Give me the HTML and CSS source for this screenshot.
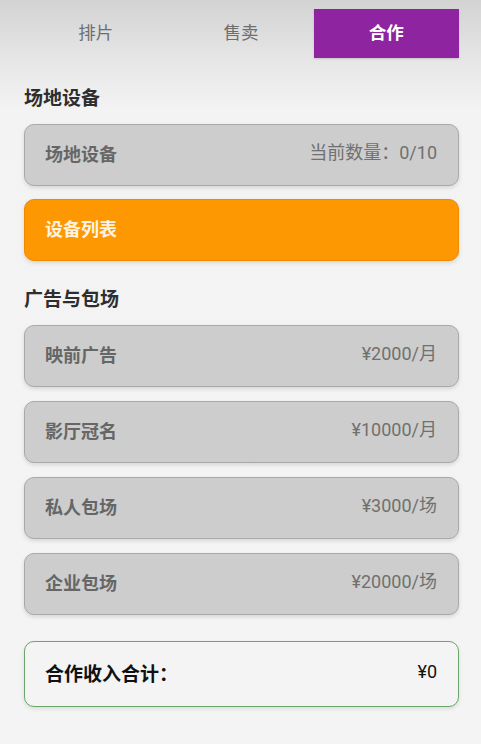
FILE: index.html
```html
<!DOCTYPE html>
<html lang="zh">
<head>
<meta charset="utf-8">
<link rel="stylesheet" href="styles.css">
</head>
<body>
<div class="page">
  <nav class="tabs">
    <div class="tab">排片</div>
    <div class="tab">售卖</div>
    <div class="tab active">合作</div>
  </nav>

  <section class="section first">
    <h2 class="title">场地设备</h2>
    <div class="list eq">
      <div class="card"><span class="name">场地设备</span><span class="value">当前数量：0/10</span></div>
      <div class="card orange"><span class="name">设备列表</span></div>
    </div>
  </section>

  <section class="section">
    <h2 class="title">广告与包场</h2>
    <div class="list">
      <div class="card"><span class="name">映前广告</span><span class="value">¥2000/月</span></div>
      <div class="card"><span class="name">影厅冠名</span><span class="value">¥10000/月</span></div>
      <div class="card"><span class="name">私人包场</span><span class="value">¥3000/场</span></div>
      <div class="card"><span class="name">企业包场</span><span class="value">¥20000/场</span></div>
    </div>
  </section>

  <div class="total"><span class="total-label">合作收入合计：</span><span class="total-value">¥0</span></div>
</div>
</body>
</html>
```

FILE: styles.css
```css
html, body {
  margin: 0;
  padding: 0;
}
body {
  width: 481px;
  height: 744px;
  overflow: hidden;
  font-family: "Roboto", "Noto Sans CJK SC", sans-serif;
  background: linear-gradient(to bottom, #d3d3d3 0px, #e9e9e9 70px, #f3f3f3 110px, #f4f4f4 100%);
}
.page {
  padding: 9px 22px 0 24px;
}
.tabs {
  display: grid;
  grid-template-columns: 1fr 1fr 1fr;
  height: 49px;
  margin-left: -1px;
}
.tab {
  display: flex;
  align-items: center;
  justify-content: center;
  padding-bottom: 3px;
  font-family: "Noto Sans CJK SC", sans-serif;
  font-size: 17.5px;
  line-height: 1;
  color: #6e6e6e;
}
.tab.active {
  background: #8e24a0;
  color: #ffffff;
  font-weight: 700;
  box-shadow: 0 1px 2px rgba(0,0,0,0.15);
}
.section {
  margin-top: 25px;
}
.section.first {
  margin-top: 27px;
}
.title {
  margin: 0 0 13px 0;
  font-family: "Noto Sans CJK SC", sans-serif;
  font-size: 19px;
  line-height: 24px;
  padding-bottom: 2px;
  font-weight: 700;
  color: #2e2e2e;
}
.list {
  display: flex;
  flex-direction: column;
  gap: 14px;
}
.list.eq {
  gap: 13px;
}
.card {
  height: 62px;
  box-sizing: border-box;
  display: flex;
  align-items: center;
  justify-content: space-between;
  padding: 0 21px 4px 20px;
  background: #cdcdcd;
  border: 1px solid #a9a9a9;
  border-radius: 10px;
  box-shadow: 0 2px 4px rgba(0,0,0,0.12);
}
.name {
  font-family: "Noto Sans CJK SC", sans-serif;
  font-size: 18px;
  line-height: 1;
  font-weight: 700;
  color: #666666;
}
.value {
  font-size: 18px;
  line-height: 1;
  color: #707070;
}
.card.orange {
  background: #fd9803;
  border-color: #f08a00;
}
.card.orange .name {
  color: #fdf3e4;
}
.total {
  margin-top: 26px;
  height: 66px;
  box-sizing: border-box;
  display: flex;
  align-items: center;
  justify-content: space-between;
  padding: 0 21px 4px 20px;
  background: #f4f4f4;
  border: 1.5px solid #6aa56c;
  border-radius: 10px;
  box-shadow: 0 2px 4px rgba(0,0,0,0.10);
}
.total-label {
  font-family: "Noto Sans CJK SC", sans-serif;
  font-size: 19px;
  line-height: 1;
  font-weight: 700;
  color: #111111;
}
.total-value {
  font-size: 18px;
  line-height: 1;
  color: #111111;
}
```
